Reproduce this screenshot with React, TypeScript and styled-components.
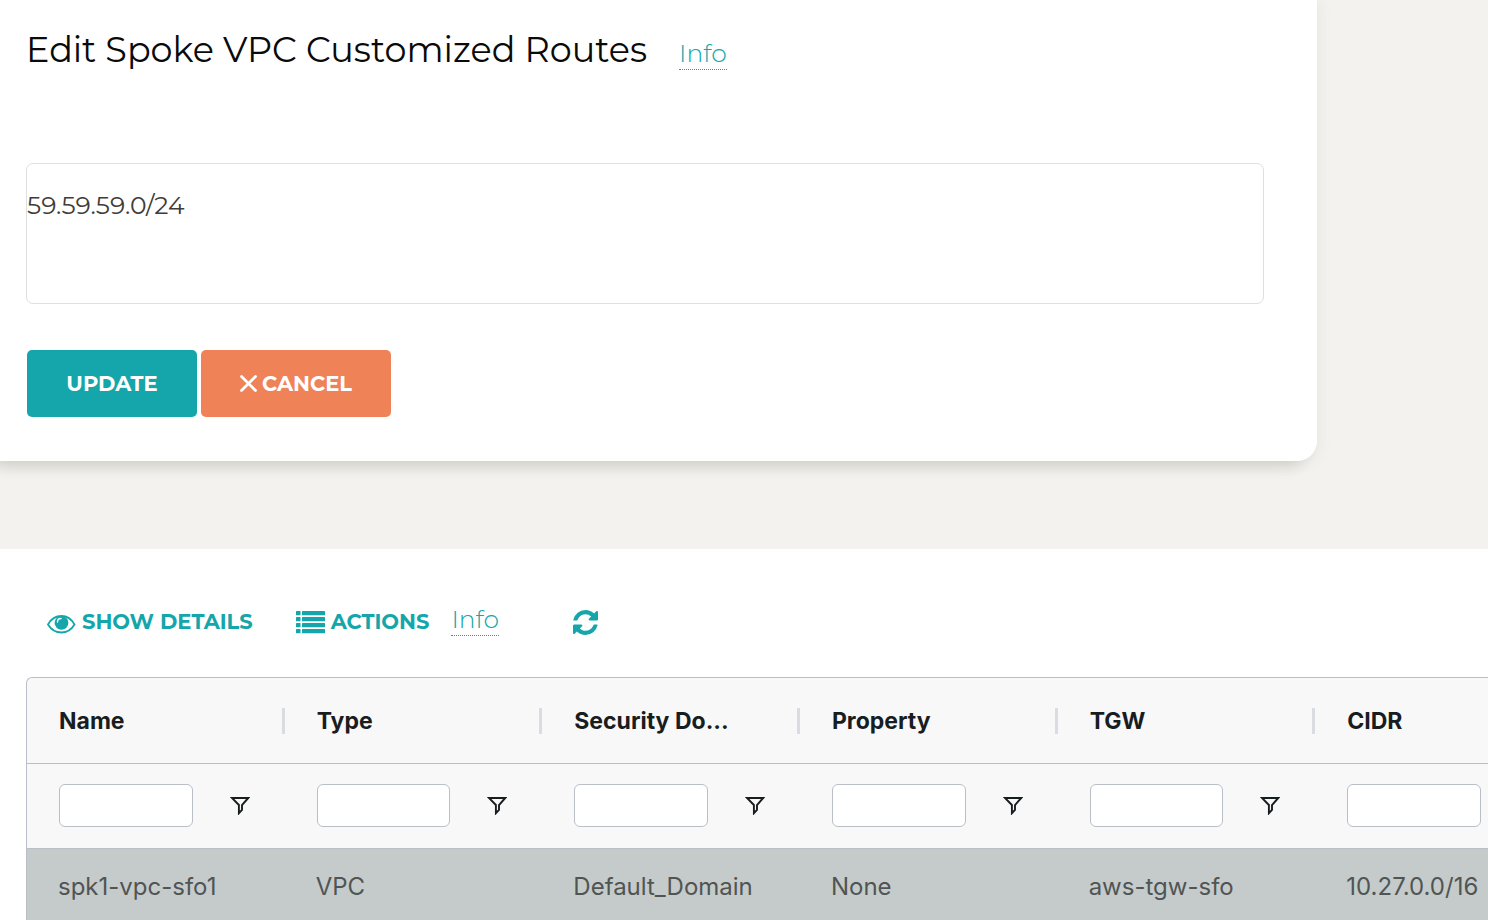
import React from "react";
import styled, { createGlobalStyle } from "styled-components";

const teal = "#14a6aa";
const line = "#babfc7";
const displayFont = `Montserrat, Inter, "Open Sans", sans-serif`;
const gridFont = `Inter, "Liberation Sans", sans-serif`;

const GlobalStyle = createGlobalStyle`
  *, *::before, *::after { box-sizing: border-box; }
  body { margin: 0; background: #f3f2ee; font-family: ${displayFont}; }
`;

const Page = styled.div`
  display: flex;
  flex-direction: column;
  height: 100vh;
  overflow: hidden;
`;

const EditArea = styled.section`
  flex: none;
  padding: 0 171px 88px 0;
`;

const Card = styled.form`
  padding: 28px 53px 44px 26px;
  background: #fff;
  border-radius: 0 0 20px 0;
  box-shadow: -10px 8px 14px -2px rgba(60, 65, 50, 0.14), 0 2px 16px rgba(60, 65, 50, 0.08);
`;

const CardHeader = styled.header`
  display: flex;
  align-items: baseline;
  gap: 32px;
  height: 135px;
`;

const Title = styled.h1`
  margin: 0;
  font-size: 35px;
  font-weight: 400;
  line-height: 44px;
  color: #0a0a0a;
  white-space: nowrap;
`;

const InfoLink = styled.a`
  border-bottom: 1px dotted ${teal};
  color: ${teal};
  font-size: 25px;
  font-weight: 300;
  line-height: 32px;
  text-decoration: none;
`;

const RoutesInput = styled.textarea`
  display: block;
  width: 100%;
  height: 141px;
  padding: 25px 0 0;
  border: 1px solid #dfdfe0;
  border-radius: 7px;
  outline: none;
  resize: none;
  background: #fff;
  color: #3f3c38;
  font: 400 25px/32px ${displayFont};
`;

const ButtonRow = styled.div`
  display: flex;
  gap: 4px;
  padding: 46px 1px 0;
`;

const Button = styled.button<{ $color: string; $width: number }>`
  display: flex;
  align-items: center;
  justify-content: center;
  gap: 5px;
  width: ${(p) => p.$width}px;
  height: 67px;
  padding: 0;
  border: 0;
  border-radius: 5px;
  background: ${(p) => p.$color};
  color: #fff;
  font: 700 21px/28px ${displayFont};
`;

const ListArea = styled.section`
  flex: 1;
  padding: 52px 0 0 26px;
  background: #fff;
`;

const Toolbar = styled.div`
  display: flex;
  align-items: flex-start;
  height: 76px;
  padding: 2px 0 0 21px;
`;

const ToolButton = styled.button<{ $gap: number }>`
  display: flex;
  align-items: center;
  gap: 6px;
  height: 38px;
  margin-right: ${(p) => p.$gap}px;
  padding: 5px 0;
  border: 0;
  background: none;
  color: ${teal};
  font: 700 21px/28px ${displayFont};
`;

const ToolbarInfo = styled(InfoLink)`
  margin-right: 74px;
`;

const Grid = styled.div`
  overflow: hidden;
  border: 1px solid ${line};
  border-width: 1px 0 0 1px;
  border-radius: 6px 0 0 0;
  background: #f8f8f8;
  font-family: ${gridFont};
`;

const Table = styled.table`
  width: 1546px;
  table-layout: fixed;
  border-collapse: collapse;
`;

const HeaderCell = styled.th`
  height: 85px;
  padding: 1px 0 0 32px;
  border-bottom: 1px solid ${line};
  text-align: left;
`;

const HeaderLabel = styled.div`
  border-right: 3px solid #d9dce0;
  color: #181d1f;
  font-size: 23px;
  font-weight: 700;
  line-height: 26px;
  white-space: nowrap;
`;

const FilterCell = styled.td`
  height: 85px;
  padding: 0 32px;
  border-bottom: 1px solid ${line};
`;

const FilterBox = styled.div`
  display: flex;
  align-items: center;
  gap: 34px;
`;

const FilterInput = styled.input`
  flex: 1;
  min-width: 0;
  height: 43px;
  padding: 0 10px;
  border: 1px solid ${line};
  border-radius: 6px;
  outline: none;
  background: #fff;
  font: 400 22px/28px ${gridFont};
`;

const FilterButton = styled.button`
  display: flex;
  justify-content: center;
  width: 26px;
  padding: 0;
  border: 0;
  background: none;
  color: #181d1f;
`;

const DataCell = styled.td`
  height: 78px;
  padding: 0 0 0 31px;
  background: #c5cbcb;
  color: #505554;
  font-size: 24px;
  line-height: 28px;
  white-space: nowrap;
`;

const CloseIcon = () => (
  <svg width="17" height="17" viewBox="0 0 17 17" fill="none" stroke="currentColor" strokeWidth="2.8" strokeLinecap="round" aria-hidden="true">
    <path d="M1.500 1.500 15.500 15.500M15.500 1.500 1.500 15.500" />
  </svg>
);

const EyeIcon = () => (
  <svg width="29" height="24" viewBox="0 0 29 24" fill="none" aria-hidden="true">
    <path d="M1 14.500C4 9 8.500 6 14.500 6s10 3 13 8.500C24.500 19.500 20 22.500 14.500 22.500S4 19.500 1 14.500Z" stroke="currentColor" strokeWidth="1.800" />
    <circle cx="14.500" cy="12.800" r="6.900" fill="currentColor" />
    <path d="M10.500 12C10.500 10 12 8.500 14 8.500" stroke="#fff" strokeWidth="1.400" strokeLinecap="round" />
  </svg>
);

const ListIcon = () => (
  <svg width="29" height="23" viewBox="0 0 29 23" fill="currentColor" aria-hidden="true">
    {[0, 6, 12, 18].map((y) => (
      <React.Fragment key={y}>
        <rect x="0" y={y} width="4.500" height="4.300" rx=".6" />
        <rect x="6" y={y} width="23" height="4.300" rx=".6" />
      </React.Fragment>
    ))}
  </svg>
);

const RefreshIcon = () => (
  <svg width="25" height="25" viewBox="0 0 1536 1536" fill="currentColor" aria-hidden="true">
    <path d="M1511 928q0 5-1 7-64 268-268 434.500T764 1536q-146 0-282.500-55T238 1324l-129 129q-19 19-45 19t-45-19-19-45V960q0-26 19-45t45-19h448q26 0 45 19t19 45-19 45l-137 137q71 66 161 102t187 36q134 0 250-65t186-179q11-17 53-117 8-23 30-23h192q13 0 22.500 9.500t9.500 22.500zm25-800v448q0 26-19 45t-45 19h-448q-26 0-45-19t-19-45 19-45l138-138Q969 256 768 256q-134 0-250 65T332 500q-11 17-53 117-8 23-30 23H50q-13 0-22.500-9.500T18 608v-7q65-268 270-434.500T768 0q146 0 284 55.500T1297 212l130-129q19-19 45-19t45 19 19 45z" />
  </svg>
);

const FunnelIcon = () => (
  <svg width="20" height="19" viewBox="0 0 20 19" fill="none" stroke="currentColor" strokeWidth="1.900" aria-hidden="true">
    <path d="M2 2h16.200L12 9v4.800L8.900 17.200V9Z" />
  </svg>
);

const columns = [
  { label: "Name", value: "spk1-vpc-sfo1" },
  { label: "Type", value: "VPC" },
  { label: "Security Do...", value: "Default_Domain" },
  { label: "Property", value: "None" },
  { label: "TGW", value: "aws-tgw-sfo" },
  { label: "CIDR", value: "10.27.0.0/16" },
];

export default function App() {
  return (
    <Page>
      <GlobalStyle />
      <EditArea>
        <Card>
          <CardHeader>
            <Title>Edit Spoke VPC Customized Routes</Title>
            <InfoLink href="#routes-info">Info</InfoLink>
          </CardHeader>
          <RoutesInput aria-label="Customized routes" defaultValue="59.59.59.0/24" spellCheck={false} />
          <ButtonRow>
            <Button type="button" $color={teal} $width={170}>UPDATE</Button>
            <Button type="button" $color="#f08258" $width={190}>
              <CloseIcon />
              CANCEL
            </Button>
          </ButtonRow>
        </Card>
      </EditArea>
      <ListArea>
        <Toolbar>
          <ToolButton type="button" $gap={43}>
            <EyeIcon />
            SHOW DETAILS
          </ToolButton>
          <ToolButton type="button" $gap={22}>
            <ListIcon />
            ACTIONS
          </ToolButton>
          <ToolbarInfo href="#actions-info">Info</ToolbarInfo>
          <ToolButton type="button" $gap={0} aria-label="Refresh">
            <RefreshIcon />
          </ToolButton>
        </Toolbar>
        <Grid>
          <Table>
            <thead>
              <tr>
                {columns.map((c) => (
                  <HeaderCell key={c.label} scope="col">
                    <HeaderLabel>{c.label}</HeaderLabel>
                  </HeaderCell>
                ))}
              </tr>
              <tr>
                {columns.map((c) => (
                  <FilterCell key={c.label}>
                    <FilterBox>
                      <FilterInput type="text" aria-label={`Filter ${c.label}`} />
                      <FilterButton type="button" aria-label={`Filter options for ${c.label}`}>
                        <FunnelIcon />
                      </FilterButton>
                    </FilterBox>
                  </FilterCell>
                ))}
              </tr>
            </thead>
            <tbody>
              <tr>
                {columns.map((c) => (
                  <DataCell key={c.label}>{c.value}</DataCell>
                ))}
              </tr>
            </tbody>
          </Table>
        </Grid>
      </ListArea>
    </Page>
  );
}
